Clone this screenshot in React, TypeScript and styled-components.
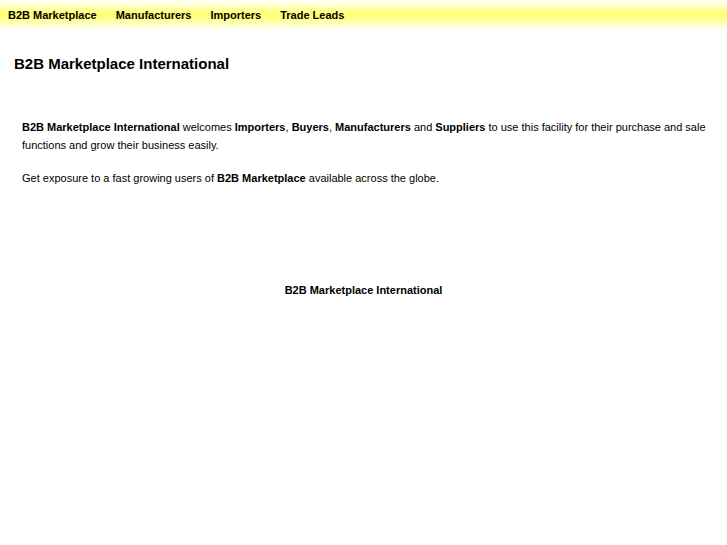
import styled, { createGlobalStyle } from "styled-components";

const GlobalStyle = createGlobalStyle`
  body {
    margin: 0;
    background: #ffffff;
    font-family: "Liberation Sans", Arial, sans-serif;
    color: #000000;
  }
`;

const NavBar = styled.nav`
  display: flex;
  align-items: center;
  gap: 19px;
  height: 30px;
  padding: 0 8px;
  background: linear-gradient(to bottom, #ffffff 0%, #ffff77 45%, #ffff77 55%, #ffffff 100%);
`;

const NavLink = styled.a`
  font-size: 11px;
  font-weight: bold;
  color: #000000;
  text-decoration: none;
`;

const Heading = styled.h1`
  margin: 25px 0 0 14px;
  font-size: 15px;
  line-height: 18px;
  font-weight: bold;
`;

const Content = styled.div`
  padding: 45px 18px 0 22px;
`;

const Paragraph = styled.p`
  margin: 0 0 15px;
  font-size: 11px;
  line-height: 18px;
`;

const Strong = styled.b`
  font-weight: bold;
`;

const Footer = styled.div`
  margin-top: 94px;
  text-align: center;
  font-size: 11px;
  font-weight: bold;
  line-height: 18px;
`;

export default function App() {
  return (
    <>
      <GlobalStyle />
      <NavBar>
        <NavLink href="#">B2B Marketplace</NavLink>
        <NavLink href="#">Manufacturers</NavLink>
        <NavLink href="#">Importers</NavLink>
        <NavLink href="#">Trade Leads</NavLink>
      </NavBar>
      <Heading>B2B Marketplace International</Heading>
      <Content>
        <Paragraph>
          <Strong>B2B Marketplace International</Strong> welcomes <Strong>Importers</Strong>,{" "}
          <Strong>Buyers</Strong>, <Strong>Manufacturers</Strong> and <Strong>Suppliers</Strong> to
          use this facility for their purchase and sale functions and grow their business easily.
        </Paragraph>
        <Paragraph>
          Get exposure to a fast growing users of <Strong>B2B Marketplace</Strong> available across
          the globe.
        </Paragraph>
      </Content>
      <Footer>B2B Marketplace International</Footer>
    </>
  );
}
